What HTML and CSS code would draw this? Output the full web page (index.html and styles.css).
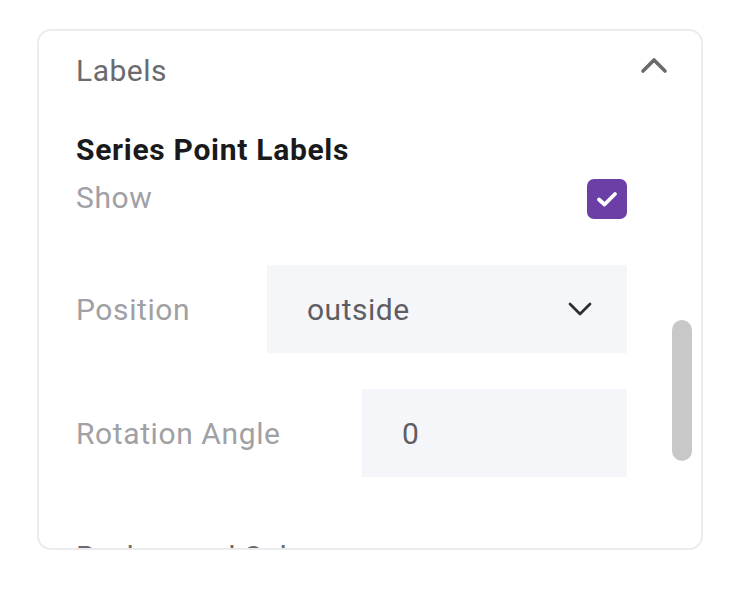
FILE: index.html
```html
<!DOCTYPE html>
<html>
<head>
<meta charset="utf-8">
<link rel="stylesheet" href="styles.css">
</head>
<body>
<div class="card">
  <div class="header">
    <span class="header-title">Labels</span>
    <svg class="chev-up" width="28" height="18" viewBox="0 0 28 18"><path d="M3 15 L14 4 L25 15" fill="none" stroke="#6a6a6a" stroke-width="3.6" stroke-linecap="round" stroke-linejoin="round"/></svg>
  </div>
  <div class="content">
    <div class="section-title">Series Point Labels</div>
    <div class="row row-show">
      <span class="label">Show</span>
      <span class="checkbox">
        <svg width="24" height="20" viewBox="0 0 24 20"><path d="M4 10.5 L9.5 15.5 L20 5" fill="none" stroke="#fff" stroke-width="3.8" stroke-linecap="round" stroke-linejoin="round"/></svg>
      </span>
    </div>
    <div class="row row-field">
      <span class="label">Position</span>
      <div class="select">
        <span class="value">outside</span>
        <svg width="26" height="16" viewBox="0 0 26 16"><path d="M3 3 L13 13 L23 3" fill="none" stroke="#2f2f33" stroke-width="2.8" stroke-linecap="round" stroke-linejoin="round"/></svg>
      </div>
    </div>
    <div class="row row-field">
      <span class="label">Rotation Angle</span>
      <div class="input"><span class="value">0</span></div>
    </div>
    <div class="section-next">Background Color</div>
  </div>
  <div class="scrollbar"></div>
</div>
</body>
</html>
```

FILE: styles.css
```css
html, body {
  margin: 0;
  padding: 0;
  background: #ffffff;
}
body {
  font-family: Roboto, "Noto Sans", "Liberation Sans", sans-serif;
  padding: 29px 0 0 37px;
}
.card {
  position: relative;
  box-sizing: border-box;
  width: 666px;
  height: 521px;
  border: 2px solid #ececef;
  border-radius: 14px;
  overflow: hidden;
  background: #fff;
}
.header {
  display: flex;
  align-items: center;
  justify-content: space-between;
  height: 78px;
  padding: 0 33px 0 37px;
}
.header-title {
  font-size: 30px;
  letter-spacing: 0.5px;
  color: #6b6b6e;
}
.chev-up {
  margin-top: -10px;
}
.content {
  padding: 0 74px 0 37px;
}
.section-title {
  margin-top: 23px;
  font-size: 30px;
  letter-spacing: 0.7px;
  line-height: 36px;
  font-weight: 700;
  color: #1a1a1c;
}
.row {
  display: flex;
  align-items: center;
  justify-content: space-between;
}
.row-show {
  margin-top: 11px;
  height: 40px;
}
.label {
  font-size: 30px;
  letter-spacing: 0.6px;
  color: #a0a0a5;
}
.row-show .label {
  margin-top: -4px;
}
.checkbox {
  width: 40px;
  height: 40px;
  border-radius: 7px;
  background: #6b3fa6;
  display: flex;
  align-items: center;
  justify-content: center;
}
.row-field {
  margin-top: 46px;
  height: 88px;
}
.row-field + .row-field {
  margin-top: 36px;
}
.select, .input {
  box-sizing: border-box;
  height: 88px;
  background: #f5f6fa;
  display: flex;
  align-items: center;
  padding: 0 34px 0 40px;
}
.select {
  width: 360px;
  justify-content: space-between;
}
.input {
  width: 265px;
}
.value {
  font-size: 30px;
  letter-spacing: 0.5px;
  color: #5e5e62;
}
.section-next {
  margin-top: 62px;
  font-size: 30px;
  line-height: 36px;
  color: #6b6b6e;
}
.scrollbar {
  position: absolute;
  right: 9px;
  top: 289px;
  width: 20px;
  height: 141px;
  border-radius: 10px;
  background: #c8c8c8;
}
```
